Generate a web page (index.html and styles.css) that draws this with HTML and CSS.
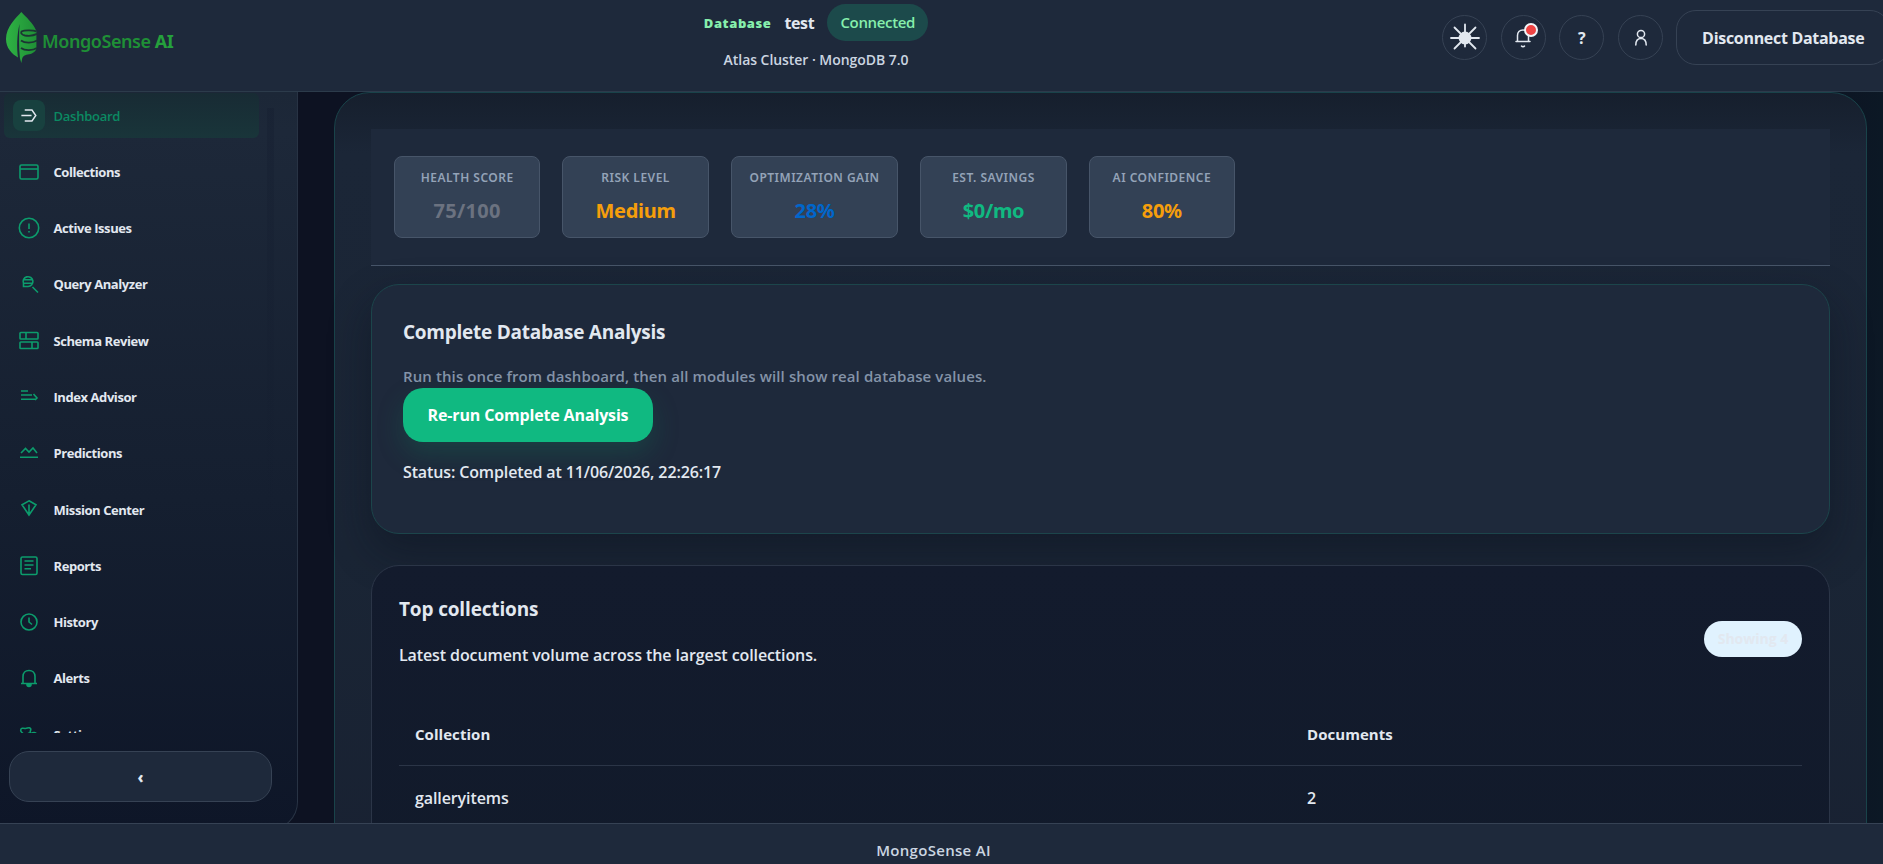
FILE: index.html
```html
<!DOCTYPE html>
<html lang="en">
<head>
<meta charset="utf-8">
<title>MongoSense AI</title>
<link rel="stylesheet" href="styles.css">
</head>
<body>
<div class="app">
  <header class="topbar">
    <div class="brand">
      <svg class="brand-leaf" viewBox="0 0 32 52">
        <defs><linearGradient id="leaf" x1="0" x2="1"><stop offset="0" stop-color="#2fb344"/><stop offset="1" stop-color="#1f8f36"/></linearGradient></defs>
        <path fill="url(#leaf)" d="M15.300 0C10 6 0 15 0 27c0 9 6 15 12 18.500C10.500 36 11 22 13.500 12c-.6 12-.6 24 .4 34l1.400 5 1-5c2-4 6-3 9.500-4.500 3-1.500 4.600-3 4.600-6V19C27 11 20 5 15.300 0z"/>
        <path fill="none" stroke="#1c3433" stroke-width="1.800" d="M30.500 19.300c-3-1-12-1.500-14.500 0-2 1.500 0 3.600 3 4.200 4 .6 9 0 12-1.600M15 28.500c4 3 12 2.500 16 0M15 36c4 3 12 2.500 16 0"/>
      </svg>
      <span class="brand-name">MongoSense <b>AI</b></span>
    </div>
    <div class="connection">
      <div class="connection-row"><span class="db-label">Database</span><span class="db-name">test</span><span class="badge-ok">Connected</span></div>
      <div class="cluster">Atlas Cluster · MongoDB 7.0</div>
    </div>
    <div class="actions">
      <button class="round"><svg width="30" height="30" viewBox="0 0 30 30" stroke="#e2e8f0" stroke-width="1.800" stroke-linecap="round" fill="#e2e8f0"><circle cx="15" cy="15" r="5.500"/><path d="M15 1.500v22M1 15h28M4.500 4.500l21 21M25.500 4.500l-21 21"/></svg></button>
      <button class="round"><svg width="22" height="22" viewBox="0 0 22 22" fill="none" stroke="#e2e8f0" stroke-width="1.500" stroke-linecap="round"><path d="M4 14.500h14M5.500 14V8.500c0-3 2-5.500 5.500-5.500s5.500 2.500 5.500 5.500V14M9.500 19c.7 1 2.300 1 3 0"/></svg><i class="dot"></i></button>
      <button class="round help">?</button>
      <button class="round"><svg width="20" height="20" viewBox="0 0 20 20" fill="none" stroke="#e2e8f0" stroke-width="1.500" stroke-linecap="round"><circle cx="10" cy="6" r="3.600"/><path d="M4.800 17c0-4 2-6.500 5.200-6.500s5.200 2.500 5.200 6.500"/></svg></button>
      <button class="disconnect">Disconnect Database</button>
    </div>
  </header>

  <div class="body">
    <aside class="sidebar">
      <nav class="nav">
        <a class="item active"><span class="ico"><svg viewBox="0 0 20 20"><path d="M5 3.500h8.500l4.500 6.500-4.500 6.500H5M1 10h12"/></svg></span><span>Dashboard</span></a>
        <a class="item"><span class="ico"><svg viewBox="0 0 20 20"><rect x="1" y="3" width="18" height="14" rx="1.500"/><path d="M1 7h18"/></svg></span><span>Collections</span></a>
        <a class="item"><span class="ico"><svg viewBox="0 0 20 20"><circle cx="10" cy="10" r="9.700"/><path d="M10 5.500v5.500M10 13v1.500"/></svg></span><span>Active Issues</span></a>
        <a class="item"><span class="ico"><svg viewBox="0 0 20 20"><path d="M4.500 12.500H9a4.900 4.900 0 1 0-4.500-3zM5 5.800h8.500M5 9.300h8.500M13.500 13l5.500 5.500"/></svg></span><span>Query Analyzer</span></a>
        <a class="item"><span class="ico"><svg viewBox="0 0 20 20"><rect x="1" y="1.500" width="18" height="6.500" rx=".8"/><rect x="1" y="11" width="18" height="6.500" rx=".8"/><path d="M7 1.500V8M13 11v6.500"/></svg></span><span>Schema Review</span></a>
        <a class="item"><span class="ico"><svg viewBox="0 0 20 20"><path d="M2 4h7M2 8h11M2 12.300h15M14.500 7l3.500 4-2 2"/></svg></span><span>Index Advisor</span></a>
        <a class="item"><span class="ico"><svg viewBox="0 0 20 20"><path d="M2 10l4.500-4.500L10 9l4-4 4 5M1 14.300h18"/></svg></span><span>Predictions</span></a>
        <a class="item"><span class="ico"><svg viewBox="0 0 20 20"><path d="M10 .8l7 4L10 15 3 4.800zM10 4.500V14"/></svg></span><span>Mission Center</span></a>
        <a class="item"><span class="ico"><svg viewBox="0 0 20 20"><rect x="2" y="1" width="16" height="17.500" rx="1.500"/><path d="M5.500 5h9M5.500 9h9M5.500 12.800H12"/></svg></span><span>Reports</span></a>
        <a class="item"><span class="ico"><svg viewBox="0 0 20 20"><circle cx="10" cy="10" r="8"/><path d="M10 5.500v4.500l3 2.500"/></svg></span><span>History</span></a>
        <a class="item"><span class="ico"><svg viewBox="0 0 20 20"><path d="M2 15.500h16M4 15V8.500C4 5 6.500 2.500 10 2.500S16 5 16 8.500V15"/><path fill="#0c9c6c" d="M8 16.500h4c0 2.500-4 2.500-4 0z"/></svg></span><span>Alerts</span></a>
        <a class="item"><span class="ico"><svg viewBox="0 0 20 20"><path d="M4.500 10c.5-2-3-2.500-2.800-5C2 3 4 3 6 3.500 8 4 10 1.500 11.500 3.500c1 1.800-1 2.500 0 4M8.500 10c0-1.500 2-3 4-1.500 1.500-1.500 4.500-1 5 .5.200 1 .5 1.500 1 2.500"/></svg></span><span>Settings</span></a>
      </nav>
      <button class="collapse">‹</button>
      <i class="scroll-track"></i>
    </aside>

    <main class="main">
      <section class="panel">
        <div class="metrics">
          <div class="metric"><span class="m-label">HEALTH SCORE</span><b class="grey">75/100</b></div>
          <div class="metric"><span class="m-label">RISK LEVEL</span><b class="amber">Medium</b></div>
          <div class="metric wide"><span class="m-label">OPTIMIZATION GAIN</span><b class="blue">28%</b></div>
          <div class="metric"><span class="m-label">EST. SAVINGS</span><b class="green">$0/mo</b></div>
          <div class="metric"><span class="m-label">AI CONFIDENCE</span><b class="amber">80%</b></div>
        </div>
        <section class="card analysis">
          <h2>Complete Database Analysis</h2>
          <p class="lead">Run this once from dashboard, then all modules will show real database values.</p>
          <button class="primary">Re-run Complete Analysis</button>
          <p class="status">Status: Completed at 11/06/2026, 22:26:17</p>
        </section>
        <section class="card collections">
          <div class="c-head">
            <div><h3>Top collections</h3><p class="sub">Latest document volume across the largest collections.</p></div>
            <span class="pill">Showing 4</span>
          </div>
          <div class="row th"><span>Collection</span><span>Documents</span></div>
          <div class="row"><span>galleryitems</span><span>2</span></div>
        </section>
      </section>
    </main>
  </div>
  <footer class="footer"><span>MongoSense AI</span></footer>
</div>
</body>
</html>
```
FILE: styles.css
```css
* { box-sizing: border-box; }
body { margin: 0; background: #0d1222; color: #e2e8f0; font-family: "Open Sans", "Noto Sans", sans-serif; overflow: hidden; }
h2, h3, p { margin: 0; }
button { font: inherit; color: inherit; padding: 0; margin: 0; }
.app { width: 1883px; height: 864px; display: flex; flex-direction: column; overflow: hidden; }
.topbar { height: 92px; flex: none; display: flex; align-items: flex-start; background: #1e293b; border-bottom: 1px solid #2c3b4b; overflow: hidden; }
.brand { width: 520px; display: flex; padding: 12px 0 0 6px; }
.brand-leaf { width: 32px; height: 52px; }
.brand-name { margin: 14px 0 0 4px; font: 600 18px/30px "Noto Sans", sans-serif; letter-spacing: -.45px; color: #1f8f36; white-space: nowrap; }
.brand-name b { font-weight: 700; color: #25a03c; }
.connection { width: 400px; margin-left: 96px; display: flex; flex-direction: column; align-items: center; padding-top: 4px; }
.connection-row { display: flex; align-items: center; height: 37px; gap: 13px; }
.db-label { font-size: 13px; font-weight: 800; color: #86efac; letter-spacing: .6px; }
.db-name { font-size: 16px; font-weight: 700; letter-spacing: -.4px; }
.badge-ok { width: 101px; height: 37px; border-radius: 19px; background: #1c4a4b; color: #86efac; font-size: 15px; font-weight: 600; line-height: 37px; text-align: center; letter-spacing: -.35px; }
.cluster { font-size: 14px; font-weight: 600; color: #cbd5e1; margin-top: 8px; line-height: 21px; letter-spacing: -.05px; }
.actions { display: flex; align-items: center; gap: 14px; padding-top: 10px; width: 441px; flex: none; margin-left: auto; }
.round { position: relative; width: 45px; height: 45px; flex: none; border: 1px solid #364254; border-radius: 50%; background: transparent; display: flex; align-items: center; justify-content: center; }
.round + .round { margin-left: -.3px; }
.help { font-size: 16px; font-weight: 700; }
.dot { position: absolute; right: 7px; top: 7px; width: 14px; height: 14px; border: 2px solid #f1f5f9; border-radius: 50%; background: #ef4444; }
.disconnect { flex: none; width: 214px; height: 55px; margin-left: -1px; border: 1px solid #364254; border-radius: 20px; background: transparent; font-size: 16px; font-weight: 700; letter-spacing: -.3px; text-align: left; padding-left: 25px; white-space: nowrap; }
.body { flex: 1; min-height: 0; display: flex; overflow: hidden; background: linear-gradient(90deg, #0d1222 95%, #0c1825); }
.sidebar { position: relative; width: 298px; flex: none; border-right: 1px solid #283344; border-bottom: 1px solid #283344; border-radius: 0 0 28px 0; background: linear-gradient(#1c2737, #1d2839 40px, #151f30 55%, #0e1628); height: 738px; }
.scroll-track { position: absolute; left: 267px; top: 16px; width: 7px; height: 430px; background: linear-gradient(rgba(15, 23, 42, .25), rgba(15, 23, 42, 0)); }
.nav { height: 641px; overflow: hidden; padding: 1px 0 0 4px; display: flex; flex-direction: column; gap: 11.300px; }
.item { height: 45px; width: 255px; flex: none; display: flex; align-items: center; padding-left: 9px; border-radius: 6px; font-size: 13px; font-weight: 700; color: #e2e8f0; letter-spacing: -.43px; }
.item.active { background: linear-gradient(#182b34, #19353a); color: #0b8a62; font-weight: 600; letter-spacing: -.25px; }
.ico { width: 32px; height: 31px; display: flex; align-items: center; justify-content: center; margin-right: 8.500px; border-radius: 8px; }
.active .ico { background: #18413f; }
.ico svg { width: 20px; height: 20px; overflow: visible; fill: none; stroke: #0c9c6c; stroke-width: 1.600; }
.active .ico svg { stroke: #e2e8f0; width: 18px; height: 17px; stroke-width: 1.700; }
.collapse { display: block; width: 263px; height: 51px; margin: 18px 0 0 9px; border: 1px solid #364254; border-radius: 20px; background: #1e293b; font-size: 15px; font-weight: 800; }
.main { flex: 1; padding: 0 15px 0 36px; }
.panel { width: 1533px; height: 900px; border: 1px solid #19434a; border-radius: 36px; background: linear-gradient(#161f2d, #1b2637 60px, #1a2535 460px, #182031 100%); padding: 36px 36px 0; }
.metrics { height: 137px; background: #1e293b; border-bottom: 1px solid #475569; display: flex; gap: 22px; padding: 27px 23px 0; }
.metric { width: 146.400px; height: 82px; flex: none; background: #334155; border: 1px solid #475569; border-radius: 8px; display: flex; flex-direction: column; align-items: center; padding-top: 11px; }
.metric.wide { width: 167.500px; }
.m-label { font: 600 12px/20px "Noto Sans", sans-serif; letter-spacing: .48px; color: #94a3b8; white-space: nowrap; }
.metric b { font: 700 20px/28px "Noto Sans", sans-serif; margin-top: 9px; letter-spacing: -.3px; }
.metric .grey { letter-spacing: .3px; }
.grey { color: #6b7280; } .amber { color: #f59e0b; } .blue { color: #0066cc; } .green { color: #10b981; }
.card { border-radius: 28px; }
.analysis { height: 250px; margin-top: 18px; background: #1e293b; border: 1px solid #1c454b; padding: 32px 31px; box-shadow: 0 18px 40px rgba(10, 16, 28, .4); }
h2 { font-size: 19px; line-height: 30px; font-weight: 700; letter-spacing: -.25px; }
.lead { font-size: 15px; line-height: 24px; font-weight: 600; color: #8493a8; margin-top: 17px; letter-spacing: .1px; }
.primary { display: block; width: 250px; height: 54px; border: 0; border-radius: 20px; background: #10b981; color: #fff; font-size: 16px; font-weight: 700; letter-spacing: -.15px; box-shadow: 0 12px 26px rgba(16, 130, 90, .25); }
.status { font-size: 16px; line-height: 24px; font-weight: 600; margin-top: 18px; letter-spacing: -.13px; }
.collections { height: 400px; margin-top: 31px; background: linear-gradient(#131b2d, #111a2a); border: 1px solid #2b3547; padding: 28px 27px; }
.c-head { display: flex; justify-content: space-between; }
h3 { font-size: 19px; line-height: 30px; font-weight: 700; letter-spacing: -.15px; }
.sub { font-size: 16px; line-height: 24px; font-weight: 600; margin-top: 19px; letter-spacing: -.1px; }
.pill { width: 98px; height: 36px; margin-top: 27px; border-radius: 18px; background: #e0f2fe; color: #e2e8f0; font-size: 14px; font-weight: 700; line-height: 36px; text-align: center; }
.row { display: grid; grid-template-columns: 892px 1fr; padding: 0 16px; height: 64px; align-items: center; font-size: 16px; font-weight: 600; letter-spacing: -.1px; }
.row.th { height: 65px; padding-top: 2px; margin-top: 34px; font-size: 15px; font-weight: 700; letter-spacing: .05px; border-bottom: 1px solid #2b3547; }
.footer { height: 41px; flex: none; background: #1e293b; border-top: 1px solid #364254; color: #cbd5e1; font-size: 15px; font-weight: 600; letter-spacing: .3px; text-align: center; line-height: 53px; padding-right: 16px; }
```
